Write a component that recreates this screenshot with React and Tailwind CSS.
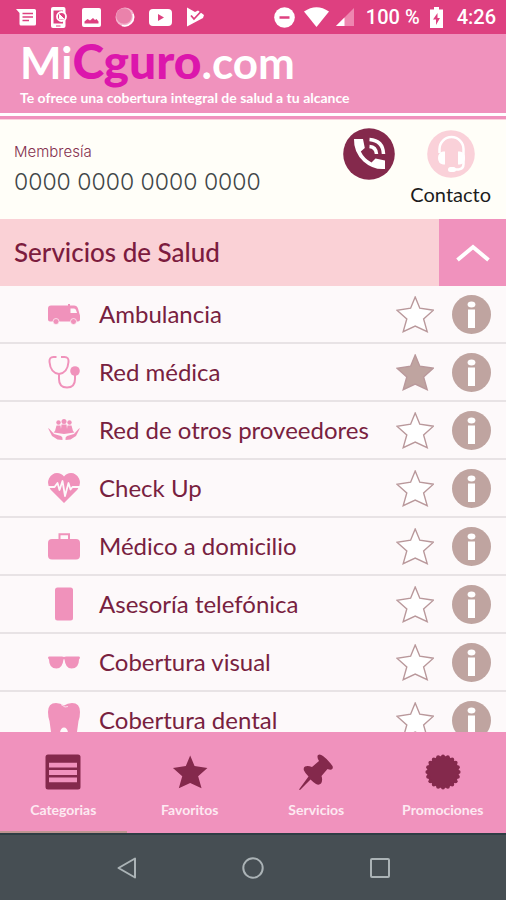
import { useState } from 'react';
import clsx from 'clsx';

const STAR_POINTS =
    '19.2,1 23.8,12.2 37.4,14.2 27.6,23 31.2,35.6 19.2,30 7.2,35.6 10.8,23 1,14.2 14.6,12.2';

/* ---------- status bar ---------- */

const StatusBar = () => (
    <div className="flex h-[34px] shrink-0 items-center justify-between bg-[#de4080] pr-[10px] pl-4 font-['Roboto',sans-serif] text-white">
        <div className="flex items-center gap-[14px]">
            <svg className="h-[17px] w-5" viewBox="0 0 20 17" fill="currentColor">
                <path d="M0 0h18.5Q20 0 20 1.5v13.5Q20 16.5 18.5 16.5H5Q3.500 16.500 3.500 15V4z" />
                <path d="M6.500 4.500H17M6.500 8H17M6.500 11.500H13" stroke="#de4080" strokeWidth="1.500" />
            </svg>
            <svg className="h-[23px] w-[18px]" viewBox="0 0 18 23">
                <rect x="1" y="1" width="14.500" height="21" rx="2" fill="#fff" />
                <path d="M3.500 4.500h9.500v13H3.500z" fill="#de4080" />
                <circle cx="11.500" cy="10.500" r="4.500" fill="#de4080" stroke="#fff" strokeWidth="1.800" />
                <path d="M9.500 8.500v4.500h4.500zM13.500 12.500l-4-4" fill="#fff" stroke="#fff" />
                <path d="M6 20h4.500" stroke="#de4080" />
            </svg>
            <svg className="h-[19px] w-[19px]" viewBox="0 0 19 19">
                <rect width="19" height="19" rx="2" fill="#fff" />
                <path d="M2.500 15.500v-2l3-2.500 2.500 1.500 3-2.500 2 2 1.500-1 2 2.500v2z" fill="#de4080" />
            </svg>
            <svg className="h-5 w-5" viewBox="0 0 20 20">
                <circle cx="10" cy="10" r="9.500" fill="#f4b5cf" />
                <circle cx="9" cy="9" r="7.800" fill="#ea82ab" />
                <path d="M18 7a9 9 0 0 1-11 11.500" fill="none" stroke="#fff" strokeWidth="1.500" />
            </svg>
            <svg className="h-[17px] w-[23px]" viewBox="0 0 23 17">
                <rect width="23" height="17" rx="4" fill="#fff" />
                <path d="M9 5l6 3.500L9 12z" fill="#de4080" />
            </svg>
            <svg className="h-5 w-[18px]" viewBox="0 0 18 20">
                <path d="M1 0.500L9 5l3-1.500L18 8l-1 3L1 19.500z" fill="#fff" />
                <path d="M5 8.500l3 3.500 7-7.500" fill="none" stroke="#de4080" strokeWidth="1.800" />
            </svg>
        </div>

        <div className="flex items-center">
            <svg className="h-[21px] w-[21px]" viewBox="0 0 21 21">
                <circle cx="10.500" cy="10.500" r="10.300" fill="#fff" />
                <path d="M5.500 10.500h10" stroke="#de4080" strokeWidth="2.500" />
            </svg>
            <svg className="ml-[9px] h-5 w-[25px]" viewBox="0 0 25 20">
                <path d="M0 4.500Q12.500-4 25 4.500L12.500 20z" fill="#fff" />
            </svg>
            <svg className="ml-[7px] h-[18px] w-[18px]" viewBox="0 0 18 18">
                <path d="M18 0v18H0z" fill="#ee87b0" />
                <path d="M8.500 9.500V18H0z" fill="#fff" />
            </svg>
            <span className="ml-3 text-xl leading-6 font-medium">100 %</span>
            <svg className="ml-[10px] h-[21px] w-[13px]" viewBox="0 0 13 21">
                <path d="M4 0h5v2.500h4V21H0V2.500h4z" fill="#fff" />
                <path d="M7.500 6L3 12.500h3V18l4-7H7.500z" fill="#de4080" />
            </svg>
            <span className="ml-[14px] text-xl leading-6 font-medium">4:26</span>
        </div>
    </div>
);

/* ---------- brand ---------- */

const BrandHeader = () => (
    <header className="shrink-0 bg-[#f092bd]">
        <div className="flex h-[79px] flex-col pl-5 text-white">
            <h1 className="h-[54px] text-[44px] leading-[54px] font-bold whitespace-nowrap">
                Mi<span className="text-[48px] font-black text-[#dc16ac]">Cguro</span>.com
            </h1>
            <p className="text-sm leading-5 font-bold">
                Te ofrece una cobertura integral de salud a tu alcance
            </p>
        </div>
        <div className="h-[3px] bg-white" />
        <div className="h-[3px]" />
        <div className="h-px bg-[#fbd3dd]" />
    </header>
);

const Membership = () => (
    <section className="flex h-[99px] shrink-0 justify-between bg-[#fffef8] pr-[15px] pl-[14px]">
        <div className="pt-[22px] font-['Inter',sans-serif] font-light">
            <p className="text-[15px] leading-5 text-[#84304f]">Membresía</p>
            <p className="pt-1 text-[23px] leading-8 whitespace-nowrap text-[#3f4648]">
                0000 0000 0000 0000
            </p>
        </div>
        <div className="flex items-start gap-[15px] pt-2">
            <button type="button" aria-label="Llamar">
                <svg className="h-[52px] w-[52px]" viewBox="0 0 52 52">
                    <circle cx="26" cy="26" r="25.800" fill="#84294c" />
                    <path
                        d="M11 11h9l1.800 9-4 3.500Q21 30.500 28.500 34.500l4-4L42 32.500v8.500Q30 42 20.500 33.500 10.500 24 11 11z"
                        fill="#fff"
                    />
                    <path
                        d="M26.500 11.500Q40 12.500 40.500 26M26.500 18.500Q33 19 33.500 26"
                        fill="none"
                        stroke="#fff"
                        strokeWidth="3.500"
                    />
                </svg>
            </button>
            <button type="button" className="flex flex-col items-center pt-[2px]">
                <svg className="h-12 w-12" viewBox="0 0 48 48">
                    <circle cx="24" cy="24" r="23.800" fill="#fad1d9" />
                    <path
                        d="M12.500 23v-4a12 12 0 0 1 24 0v15q0 5-5 5.500h-5"
                        fill="none"
                        stroke="#fff"
                        strokeWidth="2.500"
                    />
                    <path d="M18 21.500v13h-2q-5-1-5-6.500t5-6.500zM31 21.500v13h2q5-1 5-6.500t-5-6.500z" fill="#fff" />
                    <rect x="21" y="37" width="8" height="5" rx="2.500" fill="#fff" />
                </svg>
                <span className="pt-1 text-xl leading-6 text-[#1c1c1c]">Contacto</span>
            </button>
        </div>
    </section>
);

/* ---------- service icons ---------- */

const VanIcon = () => (
    <svg className="w-full" viewBox="0 0 32 21" fill="currentColor">
        <path d="M3 1.500h17V0h2v1.500h4q3 0 4 3L31.500 10q.500 1 .500 2v3.500q0 2-2 2H2q-2 0-2-2v-11q0-3 3-3z" />
        <path d="M22.500 4.500H26q1.500 0 2 1.500L29 9h-6.500z" fill="#fdf9fa" />
        <circle cx="8" cy="17.500" r="3" stroke="#fdf9fa" strokeWidth=".7" />
        <circle cx="25.500" cy="17.500" r="3" stroke="#fdf9fa" strokeWidth=".7" />
    </svg>
);

const StethoscopeIcon = () => (
    <svg className="w-full" viewBox="0 0 32 34" fill="none" stroke="currentColor" strokeWidth="2">
        <path d="M8.500 2H5.500Q1 2 1.500 7q1 11 9.500 12 8.500-1 9.500-12Q21 2 16.500 2H13" />
        <path d="M11 19v5q0 8.500 8 8.500t8-8.500v-4" />
        <circle cx="27" cy="16" r="4.800" fill="currentColor" stroke="none" />
    </svg>
);

const HandsIcon = () => (
    <svg className="w-full" viewBox="0 0 32 22" fill="currentColor">
        <circle cx="16" cy="2.500" r="2.500" />
        <circle cx="10.500" cy="3.500" r="2.200" />
        <circle cx="21.500" cy="3.500" r="2.200" />
        <path d="M7 12l1.500-5.500h4L13 10l.500-4.500h5L19 10l.500-3.500h4L25 12l1.500 1.500L16 15 5.500 13.500z" />
        <path d="M0 9l1.500 1 4.500 5 7 2q2 1 1.500 4l-5-.500L4 17zM32 9l-1.500 1-4.500 5-7 2q-2 1-1.500 4l5-.500L28 17z" />
    </svg>
);

const HeartPulseIcon = () => (
    <svg className="w-full" viewBox="0 0 32 30">
        <path
            d="M16 30L2.500 16.500Q-1.500 11 1 5.500 4 0 9 0q4.500 0 7 3.500Q18.500 0 23 0q5 0 8 5.500 2.500 5.500-1.500 11z"
            fill="currentColor"
        />
        <path
            d="M0 14h6.500L9.500 10l2 7 3-9L17 23l3.500-13 2 6.500 2-2.500H32"
            fill="none"
            stroke="#fdf9fa"
            strokeWidth="1.800"
            strokeLinejoin="round"
        />
    </svg>
);

const BriefcaseIcon = () => (
    <svg className="w-full" viewBox="0 0 32 27">
        <rect y="6" width="32" height="20.500" rx="4" fill="currentColor" />
        <path d="M11.500 7V1.200h9.500V7" fill="none" stroke="currentColor" strokeWidth="2" />
    </svg>
);

const MobileIcon = () => (
    <svg className="w-full" viewBox="0 0 32 34">
        <rect x="7" y="0.500" width="18" height="33" rx="2.500" fill="currentColor" />
    </svg>
);

const GlassesIcon = () => (
    <svg className="w-full" viewBox="0 0 32 13">
        <path
            d="M1 .500h13l2 .500 2-.500h13q1 0 1 1.500l-1 1.500q0 9-7.500 9-6 0-7-9Q16 2.500 15.500 3.500q-1 9-7 9Q1 12.500 1 3.500L0 2Q0 .500 1 .500z"
            fill="currentColor"
        />
    </svg>
);

const ToothIcon = () => (
    <svg className="w-full" viewBox="0 0 32 34">
        <path
            d="M8 0q4.500 0 8 2.500Q19.500 0 24 0q8 0 8 9 0 5-1.500 9L29 29q-1 5-5 5-3 0-4-4.500-.800-5-4-5t-4 5Q11 34 8 34q-4 0-5-5L1.500 18Q0 14 0 9 0 0 8 0z"
            fill="currentColor"
        />
        <path d="M13 1.500l4 2.500 3-.500" fill="none" stroke="#fdf9fa" strokeWidth=".7" />
    </svg>
);

const services = [
    { name: 'Ambulancia', Icon: VanIcon },
    { name: 'Red médica', Icon: StethoscopeIcon },
    { name: 'Red de otros proveedores', Icon: HandsIcon },
    { name: 'Check Up', Icon: HeartPulseIcon },
    { name: 'Médico a domicilio', Icon: BriefcaseIcon },
    { name: 'Asesoría telefónica', Icon: MobileIcon },
    { name: 'Cobertura visual', Icon: GlassesIcon },
    { name: 'Cobertura dental', Icon: ToothIcon },
];

const ServiceRow = ({ name, Icon, favorite, onToggle }) => (
    <li className="flex h-[58px] items-center border-b-2 border-[#e8e3e5] pr-[15px] pl-12">
        <span className="w-8 shrink-0 text-[#f092bb]">
            <Icon />
        </span>
        <span className="flex-1 pl-[19px] text-2xl leading-8 whitespace-nowrap text-[#78213f]">{name}</span>
        <button type="button" aria-label={`Favorito ${name}`} aria-pressed={favorite} onClick={onToggle}>
            <svg
                className={clsx('h-[37px] w-[38px]', favorite ? 'fill-[#bfa4a0]' : 'fill-white')}
                viewBox="0 0 38 37"
                stroke="#b9989b"
                strokeWidth="1.400"
            >
                <polygon points={STAR_POINTS} />
            </svg>
        </button>
        <button type="button" aria-label={`Información ${name}`} className="pl-[18px]">
            <svg className="h-[39px] w-[39px]" viewBox="0 0 39 39">
                <circle cx="19.500" cy="19.500" r="19.500" fill="#bfa4a0" />
                <ellipse cx="19.500" cy="9.500" rx="3.900" ry="3" fill="#fff" />
                <rect x="16" y="14.500" width="7" height="18.500" fill="#fff" />
            </svg>
        </button>
    </li>
);

const ServiceList = () => {
    const [open, setOpen] = useState(true);
    const [favorites, setFavorites] = useState(['Red médica']);

    const toggleFavorite = (name) => {
        setFavorites((prev) => (prev.includes(name) ? prev.filter((n) => n !== name) : [...prev, name]));
    };

    return (
        <main className="flex min-h-0 flex-1 flex-col bg-[#fdf9fa]">
            <div className="flex h-[67px] shrink-0 bg-[#fad1d6]">
                <h2 className="flex flex-1 items-center pl-[14px] text-[26px] font-medium text-[#7c1c3e]">
                    Servicios de Salud
                </h2>
                <button
                    type="button"
                    aria-label="Servicios de Salud"
                    aria-expanded={open}
                    onClick={() => setOpen(!open)}
                    className="flex w-[67px] items-center justify-center bg-[#f092bd]"
                >
                    <svg className={clsx('h-[18px] w-[34px]', !open && 'rotate-180')} viewBox="0 0 34 18">
                        <path d="M1.500 16L17 3l15.500 13" fill="none" stroke="#fff" strokeWidth="4" />
                    </svg>
                </button>
            </div>
            <ul className="min-h-0 flex-1 overflow-y-auto [scrollbar-width:none]">
                {open &&
                    services.map((s) => (
                        <ServiceRow
                            key={s.name}
                            {...s}
                            favorite={favorites.includes(s.name)}
                            onToggle={() => toggleFavorite(s.name)}
                        />
                    ))}
            </ul>
        </main>
    );
};

/* ---------- bottom tabs ---------- */

const CategoriesIcon = () => (
    <svg className="h-9 w-9" viewBox="0 0 36 36">
        <rect x=".5" y=".5" width="35" height="35" rx="2.500" fill="#84294c" />
        <path d="M4 11.200h28M4 18.500h28M4 25.800h28" stroke="#f092bd" strokeWidth="4.800" />
    </svg>
);

const FavoritesIcon = () => (
    <svg className="h-9 w-9" viewBox="0 0 38 37" fill="#84294c">
        <polygon points={STAR_POINTS} />
    </svg>
);

const PinIcon = () => (
    <svg className="h-9 w-9" viewBox="0 0 36 36" fill="#84294c">
        <path d="M20 1q2-1.500 5 1 5 3.500 9.500 10 1 2.500-1 3.500-1.500.500-4-.500l-6 7q1.500 4.500-.500 7.500-2 2-5 .500-2-1-5.500-4.500L2 36l-1-.500 9.500-13Q7 19 6 16.500q-1-2.500 1-4 3-1 7 .500l7-6q-2.500-4-1-6z" />
    </svg>
);

// scalloped seal: a disc plus a ring of small bumps
const SealIcon = () => (
    <svg className="h-9 w-9" viewBox="0 0 36 36" fill="#84294c">
        <circle cx="18" cy="18" r="16" />
        {Array.from({ length: 20 }, (_, i) => {
            const angle = (i * Math.PI) / 10;
            return <circle key={i} cx={18 + 15.6 * Math.cos(angle)} cy={18 + 15.6 * Math.sin(angle)} r="2" />;
        })}
    </svg>
);

const tabs = [
    { label: 'Categorias', Icon: CategoriesIcon },
    { label: 'Favoritos', Icon: FavoritesIcon },
    { label: 'Servicios', Icon: PinIcon },
    { label: 'Promociones', Icon: SealIcon },
];

const BottomTabs = () => {
    const [active, setActive] = useState('Categorias');

    return (
        <nav className="grid h-[101px] shrink-0 grid-cols-4 bg-[#f092bd]">
            {tabs.map(({ label, Icon }) => (
                <button
                    key={label}
                    type="button"
                    onClick={() => setActive(label)}
                    className={clsx(
                        'flex flex-col items-center border-b-2 pt-[22px]',
                        active === label ? 'border-[#bd9490]' : 'border-transparent'
                    )}
                >
                    <Icon />
                    <span className="pt-[10px] text-sm leading-5 font-bold text-[#fdeaf2]">{label}</span>
                </button>
            ))}
        </nav>
    );
};

const SystemNav = () => (
    <div className="flex h-[67px] shrink-0 justify-center border-t-2 border-[#2f3d44] bg-[#464e53]">
        <button type="button" aria-label="Atrás" className="flex w-1/4 items-center justify-center">
            <svg className="h-[22px] w-5" viewBox="0 0 20 22">
                <path d="M18 1.500v19L1.500 11z" fill="none" stroke="#abb3b6" strokeWidth="2" strokeLinejoin="round" />
            </svg>
        </button>
        <button type="button" aria-label="Inicio" className="flex w-1/4 items-center justify-center">
            <svg className="h-[22px] w-[22px]" viewBox="0 0 22 22">
                <circle cx="11" cy="11" r="9.700" fill="none" stroke="#abb3b6" strokeWidth="2" />
            </svg>
        </button>
        <button type="button" aria-label="Recientes" className="flex w-1/4 items-center justify-center">
            <svg className="h-5 w-5" viewBox="0 0 20 20">
                <rect x="1" y="1" width="18" height="18" rx="1" fill="none" stroke="#abb3b6" strokeWidth="2" />
            </svg>
        </button>
    </div>
);

const App = () => {
    return (
        <div className="flex h-screen flex-col overflow-hidden font-['Lato',sans-serif]">
            <StatusBar />
            <BrandHeader />
            <Membership />
            <ServiceList />
            <BottomTabs />
            <SystemNav />
        </div>
    );
};

export default App;
